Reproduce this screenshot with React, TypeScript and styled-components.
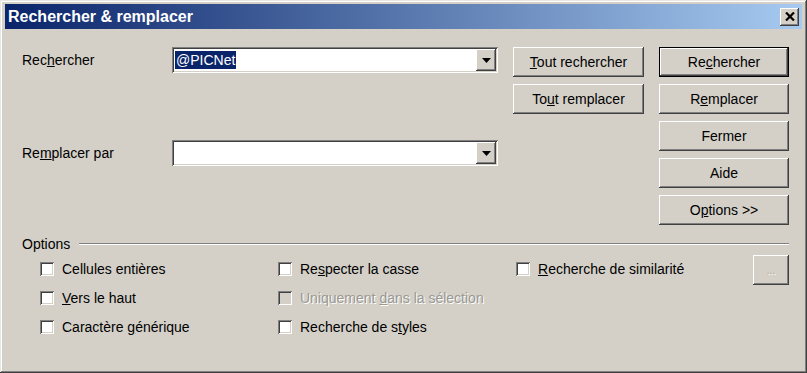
import React from 'react';
import styled, { createGlobalStyle, css } from 'styled-components';

const GlobalStyle = createGlobalStyle`
  html, body {
    margin: 0;
    padding: 0;
    background: #ffffff;
  }
  body {
    font-family: "Liberation Sans", Arial, sans-serif;
    font-size: 14px;
    color: #000000;
  }
`;

const raised = css`
  background: #d4d0c8;
  box-shadow: inset -1px -1px #404040, inset 1px 1px #ffffff,
    inset -2px -2px #808080, inset 2px 2px #d4d0c8;
`;

const sunken = css`
  box-shadow: inset 1px 1px #808080, inset -1px -1px #ffffff,
    inset 2px 2px #404040, inset -2px -2px #d4d0c8;
`;

const Window = styled.div`
  box-sizing: border-box;
  width: 807px;
  height: 373px;
  padding: 4px 5px;
  background: #d4d0c8;
  box-shadow: inset -1px -1px #404040, inset 1px 1px #e8e6e0,
    inset -2px -2px #808080, inset 2px 2px #ffffff;
  display: flex;
  flex-direction: column;
`;

const TitleBar = styled.div`
  height: 25px;
  display: flex;
  align-items: center;
  justify-content: space-between;
  padding: 0 3px;
  background: linear-gradient(to right, #0a246a, #a6caf0);
`;

const Title = styled.span`
  color: #ffffff;
  font-weight: bold;
  font-size: 16px;
`;

const CloseButton = styled.div`
  ${raised};
  width: 19px;
  height: 18px;
  display: flex;
  align-items: center;
  justify-content: center;
`;

const Content = styled.div`
  padding: 18px 13px 0 17px;
  display: flex;
  flex-direction: column;
`;

const TopSection = styled.div`
  display: flex;
  gap: 15px;
`;

const Fields = styled.div`
  width: 476px;
  display: flex;
  flex-direction: column;
  gap: 67px;
`;

const FieldRow = styled.div`
  display: flex;
  align-items: center;
`;

const FieldLabel = styled.label`
  width: 150px;
`;

const Combo = styled.div`
  ${sunken};
  box-sizing: border-box;
  width: 326px;
  height: 26px;
  padding: 2px;
  background: #ffffff;
  display: flex;
  align-items: center;
`;

const ComboText = styled.div`
  flex: 1;
  padding-left: 1px;
  display: flex;
  align-items: center;
`;

const Selected = styled.span`
  background: #0a246a;
  color: #ffffff;
  padding: 1px 1px;
  line-height: 16px;
`;

const DropButton = styled.div`
  ${raised};
  width: 20px;
  height: 22px;
  display: flex;
  align-items: center;
  justify-content: center;
`;

const ButtonColumn = styled.div<{ $width: number }>`
  width: ${p => p.$width}px;
  display: flex;
  flex-direction: column;
  gap: 7px;
`;

const Button = styled.button<{ $default?: boolean }>`
  ${raised};
  box-sizing: border-box;
  height: 30px;
  border: none;
  padding: 0;
  font-family: "Liberation Sans", Arial, sans-serif;
  font-size: 14px;
  color: #000000;
  ${p => p.$default && css`
    box-shadow: inset 0 0 0 1px #000000, inset -2px -2px #404040,
      inset 2px 2px #ffffff, inset -3px -3px #808080;
  `}
`;

const U = styled.span`
  text-decoration: underline;
`;

const Legend = styled.div`
  margin-top: 11px;
  display: flex;
  align-items: center;
  gap: 9px;
  height: 16px;
`;

const LegendLine = styled.div`
  flex: 1;
  border-top: 1px solid #808080;
  border-bottom: 1px solid #ffffff;
`;

const CheckGrid = styled.div`
  margin-top: 2px;
  padding-left: 18px;
  display: grid;
  grid-template-columns: 238px 238px 1fr 36px;
  grid-auto-rows: 29px;
`;

const CheckItem = styled.label<{ $disabled?: boolean; $col: number; $row: number }>`
  grid-column: ${p => p.$col};
  grid-row: ${p => p.$row};
  display: flex;
  align-items: center;
  gap: 8px;
  color: ${p => (p.$disabled ? '#9a9892' : '#000000')};
  text-shadow: ${p => (p.$disabled ? '1px 1px #ffffff' : 'none')};
`;

const Box = styled.span<{ $disabled?: boolean }>`
  ${sunken};
  box-sizing: border-box;
  width: 14px;
  height: 14px;
  background: ${p => (p.$disabled ? '#d4d0c8' : '#ffffff')};
  flex-shrink: 0;
`;

const SmallButton = styled.div`
  ${raised};
  grid-column: 4;
  grid-row: 1;
  width: 36px;
  height: 30px;
  margin-top: 1px;
  display: flex;
  align-items: center;
  justify-content: center;
  font-size: 10px;
  color: #a8a59e;
  text-shadow: 1px 1px #ffffff;
`;

const Arrow = () => (
  <svg width="9" height="5" viewBox="0 0 9 5">
    <path d="M0 0h9L4.5 5z" fill="#000" />
  </svg>
);

const CloseIcon = () => (
  <svg width="10" height="9" viewBox="0 0 10 9">
    <path d="M1 0.5l8 8M9 0.5l-8 8" stroke="#000" strokeWidth="2.2" />
  </svg>
);

const checks = [
  { col: 1, row: 1, label: <>Cellules entières</> },
  { col: 1, row: 2, label: <><U>V</U>ers le haut</> },
  { col: 1, row: 3, label: <>Caractère <U>g</U>énérique</> },
  { col: 2, row: 1, label: <>Re<U>s</U>pecter la casse</> },
  { col: 2, row: 2, label: <>Uniquement <U>d</U>ans la sélection</>, disabled: true },
  { col: 2, row: 3, label: <>Recherche de s<U>t</U>yles</> },
  { col: 3, row: 1, label: <><U>R</U>echerche de similarité</> },
];

export default function App() {
  return (
    <>
      <GlobalStyle />
      <Window>
        <TitleBar>
          <Title>Rechercher &amp; remplacer</Title>
          <CloseButton><CloseIcon /></CloseButton>
        </TitleBar>
        <Content>
          <TopSection>
            <Fields>
              <FieldRow>
                <FieldLabel>Rec<U>h</U>ercher</FieldLabel>
                <Combo>
                  <ComboText><Selected>@PICNet</Selected></ComboText>
                  <DropButton><Arrow /></DropButton>
                </Combo>
              </FieldRow>
              <FieldRow>
                <FieldLabel>Re<U>m</U>placer par</FieldLabel>
                <Combo>
                  <ComboText />
                  <DropButton><Arrow /></DropButton>
                </Combo>
              </FieldRow>
            </Fields>
            <ButtonColumn $width={133}>
              <Button><U>T</U>out rechercher</Button>
              <Button>To<U>u</U>t remplacer</Button>
            </ButtonColumn>
            <ButtonColumn $width={132}>
              <Button $default>Re<U>c</U>hercher</Button>
              <Button>R<U>e</U>mplacer</Button>
              <Button>Fermer</Button>
              <Button>Aide</Button>
              <Button>O<U>p</U>tions &gt;&gt;</Button>
            </ButtonColumn>
          </TopSection>
          <Legend>
            <span>Options</span>
            <LegendLine />
          </Legend>
          <CheckGrid>
            {checks.map((c, i) => (
              <CheckItem key={i} $col={c.col} $row={c.row} $disabled={c.disabled}>
                <Box $disabled={c.disabled} />
                <span>{c.label}</span>
              </CheckItem>
            ))}
            <SmallButton>...</SmallButton>
          </CheckGrid>
        </Content>
      </Window>
    </>
  );
}
